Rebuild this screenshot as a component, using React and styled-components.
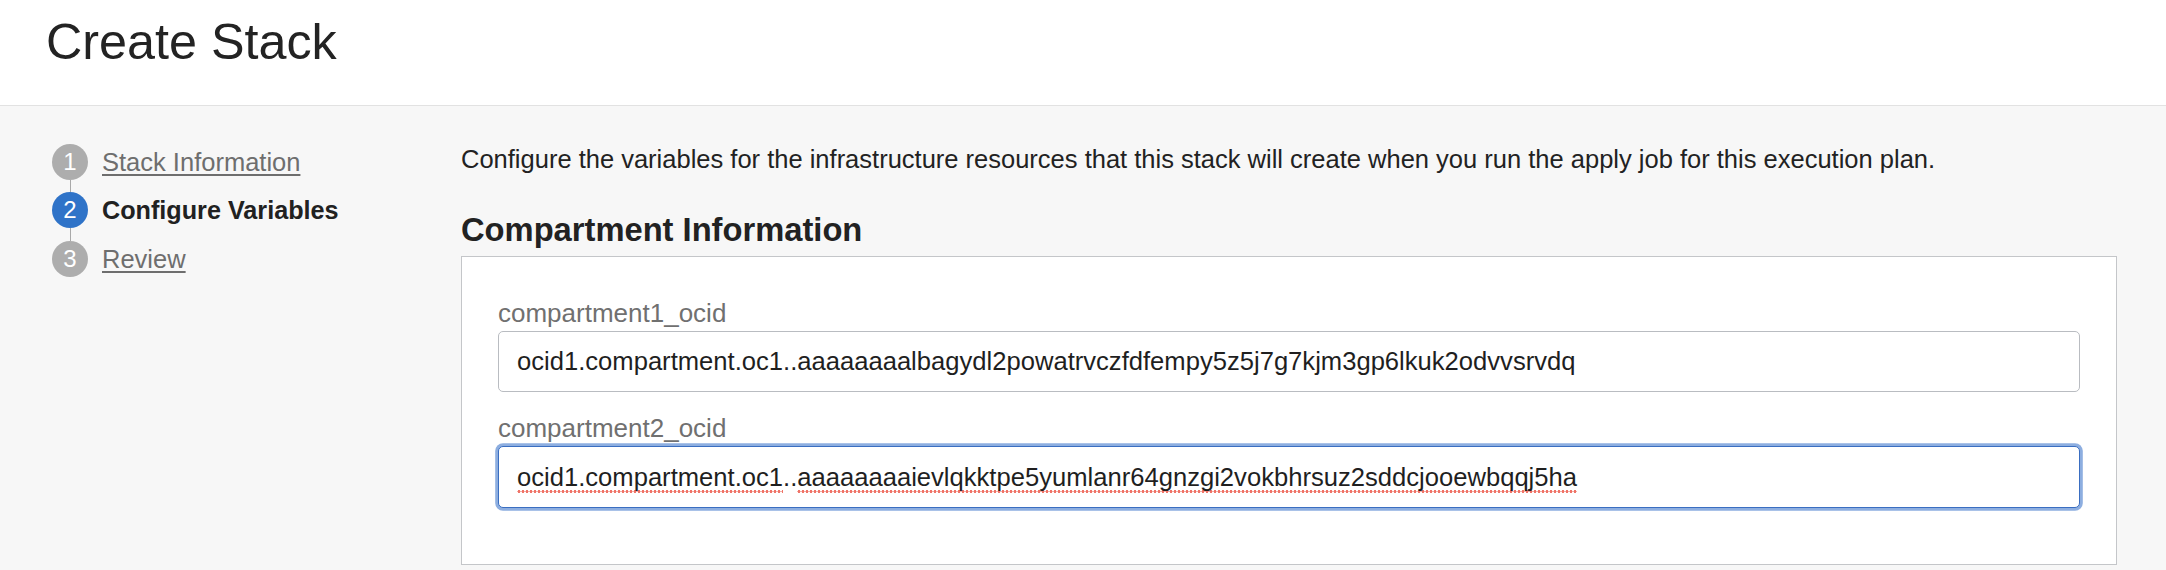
import React from "react";
import styled, { createGlobalStyle } from "styled-components";

const GlobalStyle = createGlobalStyle`
  html, body {
    margin: 0;
    padding: 0;
    background: #f7f7f7;
  }
  body {
    font-family: "Liberation Sans", Arial, Helvetica, sans-serif;
    color: #222222;
  }
  * { box-sizing: border-box; }
`;

const Page = styled.div`
  width: 2166px;
  min-height: 570px;
  background: #f7f7f7;
`;

const Header = styled.header`
  background: #ffffff;
  border-bottom: 1px solid #e2e2e2;
  height: 106px;
  padding: 12px 0 0 46px;
`;

const Title = styled.h1`
  margin: 0;
  font-size: 50.3px;
  line-height: 60px;
  font-weight: 400;
  color: #232323;
`;

const Body = styled.div`
  display: flex;
  padding: 38px 49px 0 52px;
`;

const Sidebar = styled.nav`
  width: 409px;
  flex: none;
  display: flex;
  flex-direction: column;
`;

const Step = styled.div`
  display: flex;
  align-items: center;
  height: 36px;
`;

const StepBadge = styled.span`
  width: 36px;
  height: 36px;
  border-radius: 50%;
  flex: none;
  display: flex;
  align-items: center;
  justify-content: center;
  background: ${(p) => (p.$active ? "#2f73c8" : "#adadad")};
  color: #ffffff;
  font-size: 24px;
  line-height: 36px;
`;

const StepLabel = styled.a`
  margin-left: 14px;
  font-size: ${(p) => (p.$active ? "25.2px" : "25.5px")};
  line-height: 36px;
  color: ${(p) => (p.$active ? "#212121" : "#6e6e6e")};
  font-weight: ${(p) => (p.$active ? 700 : 400)};
  text-decoration: ${(p) => (p.$active ? "none" : "underline")};
  text-decoration-thickness: 1.5px;
  text-underline-offset: 3px;
  cursor: pointer;
`;

const Connector = styled.div`
  width: 1px;
  height: 12.3px;
  margin-left: 17.5px;
  background: #a9a9a9;
`;

const Main = styled.main`
  flex: 1;
  min-width: 0;
`;

const Description = styled.p`
  margin: 0;
  font-size: 25.5px;
  line-height: 30px;
  color: #222222;
  white-space: nowrap;
`;

const SectionTitle = styled.h2`
  margin: 36.7px 0 7.3px;
  font-size: 32.7px;
  line-height: 38px;
  font-weight: 700;
  color: #222222;
`;

const Panel = styled.section`
  background: #ffffff;
  border: 1px solid #c4c6c9;
  padding: 40.7px 36px 56px 36px;
`;

const Field = styled.div`
  display: flex;
  flex-direction: column;
  & + & {
    margin-top: 21px;
  }
`;

const Label = styled.label`
  font-size: 26px;
  line-height: 30px;
  color: #707070;
  margin-bottom: 3px;
`;

const TextBox = styled.div`
  height: 61.6px;
  border-radius: 5px;
  background: #ffffff;
  border: ${(p) => (p.$focused ? "1.5px solid #3a6ec1" : "1px solid #b9bcc1")};
  box-shadow: ${(p) => (p.$focused ? "0 0 0 2.8px #8daee0" : "none")};
  padding: 0 18px;
  display: flex;
  align-items: center;
  font-size: 25.6px;
  line-height: 59px;
  color: #1f1f1f;
  white-space: nowrap;
  overflow: hidden;
`;

const Line = styled.span`
  line-height: normal;
`;

const Misspelled = styled.span`
  padding-bottom: 2px;
  background-image: radial-gradient(circle at 2px 1.5px, #ef7468 1.3px, rgba(239, 116, 104, 0) 1.8px);
  background-size: 4px 3px;
  background-repeat: repeat-x;
  background-position: 0 100%;
`;

const steps = [
  { n: 1, label: "Stack Information" },
  { n: 2, label: "Configure Variables", active: true },
  { n: 3, label: "Review" },
];

export default function App() {
  return (
    <Page>
      <GlobalStyle />
      <Header>
        <Title>Create Stack</Title>
      </Header>
      <Body>
        <Sidebar>
          {steps.map((s, i) => (
            <React.Fragment key={s.n}>
              {i > 0 && <Connector />}
              <Step>
                <StepBadge $active={s.active}>{s.n}</StepBadge>
                <StepLabel $active={s.active}>{s.label}</StepLabel>
              </Step>
            </React.Fragment>
          ))}
        </Sidebar>
        <Main>
          <Description>
            Configure the variables for the infrastructure resources that this stack will create when you run the apply job for this execution plan.
          </Description>
          <SectionTitle>Compartment Information</SectionTitle>
          <Panel>
            <Field>
              <Label>compartment1_ocid</Label>
              <TextBox role="textbox">
                ocid1.compartment.oc1..aaaaaaaalbagydl2powatrvczfdfempy5z5j7g7kjm3gp6lkuk2odvvsrvdq
              </TextBox>
            </Field>
            <Field>
              <Label>compartment2_ocid</Label>
              <TextBox role="textbox" $focused>
                <Line>
                  <Misspelled>ocid1.compartment.oc1</Misspelled>
                  ..
                  <Misspelled>aaaaaaaaievlqkktpe5yumlanr64gnzgi2vokbhrsuz2sddcjooewbqqj5ha</Misspelled>
                </Line>
              </TextBox>
            </Field>
          </Panel>
        </Main>
      </Body>
    </Page>
  );
}
